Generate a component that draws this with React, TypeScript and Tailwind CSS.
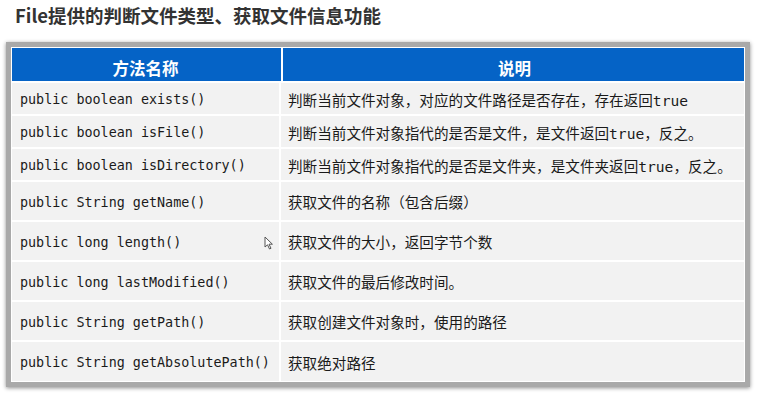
import React from "react";

const rows = [
  { name: "public boolean exists()", desc: "判断当前文件对象，对应的文件路径是否存在，存在返回true", h: "h-[31px]" },
  { name: "public boolean isFile()", desc: "判断当前文件对象指代的是否是文件，是文件返回true，反之。", h: "h-[31px]" },
  { name: "public boolean isDirectory()", desc: "判断当前文件对象指代的是否是文件夹，是文件夹返回true，反之。", h: "h-[31px]" },
  { name: "public String getName()", desc: "获取文件的名称（包含后缀）", h: "h-[38px]" },
  { name: "public long length()", desc: "获取文件的大小，返回字节个数", h: "h-[38px]" },
  { name: "public long lastModified()", desc: "获取文件的最后修改时间。", h: "h-[38px]" },
  { name: "public String getPath()", desc: "获取创建文件对象时，使用的路径", h: "h-[38px]" },
  { name: "public String getAbsolutePath()", desc: "获取绝对路径", h: "h-[39px]" },
];

const mono = "font-['DejaVu_Sans_Mono','Noto_Sans_CJK_SC',monospace]";

function Cursor() {
  return (
    <svg
      className="absolute left-[264px] top-[236px]"
      width="10"
      height="14"
      viewBox="0 0 10 14"
    >
      <path
        d="M1 1 L1 11 L3.5 8.8 L5.5 13 L7 12.3 L5 8.2 L8.4 8.2 Z"
        fill="#fff"
        stroke="#555"
        strokeWidth="1"
        strokeLinejoin="round"
      />
    </svg>
  );
}

export default function App() {
  return (
    <div className="relative w-[760px] h-[394px] bg-white overflow-hidden font-['Noto_Sans_CJK_SC',sans-serif]">
      <div className="h-[42px] pl-[15px] pt-[3px] text-[18.5px] leading-[24px] font-bold text-[#333]">
        File提供的判断文件类型、获取文件信息功能
      </div>

      <div className="ml-[6px] w-[744px] p-[5px] bg-[#a9a9a9] shadow-[0_1px_4px_rgba(0,0,0,0.45)]">
        <div className="border border-white bg-white flex flex-col gap-[2px]">
          <div className="flex gap-[2px] h-[33px] bg-[#0563c6]">
            <div className="w-[267px] flex items-center justify-center pt-[8px] text-white font-bold text-[16.5px] leading-none">
              方法名称
            </div>
            <div className="w-[2px] bg-white" />
            <div className="flex-1 flex items-center justify-center pt-[8px] text-white font-bold text-[16.5px] leading-none">
              说明
            </div>
          </div>
          {rows.map((r) => (
            <div key={r.name} className={`flex gap-[2px] ${r.h}`}>
              <div
                className={`w-[267px] bg-[#f2f2f2] flex items-center pl-[8px] pt-[4px] text-[13.4px] text-[#1a1a1a] whitespace-nowrap ${mono}`}
              >
                {r.name}
              </div>
              <div
                className={`flex-1 bg-[#f2f2f2] flex items-center pl-[7px] pt-[4px] text-[14.6px] text-[#1a1a1a] whitespace-nowrap ${mono}`}
              >
                {r.desc}
              </div>
            </div>
          ))}
        </div>
      </div>

      <Cursor />
    </div>
  );
}
